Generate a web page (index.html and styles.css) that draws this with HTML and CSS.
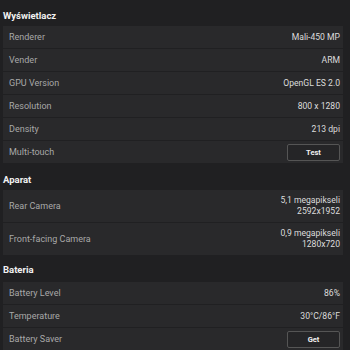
FILE: index.html
```html
<!DOCTYPE html>
<html>
<head>
<meta charset="utf-8">
<link rel="stylesheet" href="styles.css">
</head>
<body>
<div class="page">
  <div class="section-title">Wyświetlacz</div>
  <div class="list">
    <div class="row"><span class="label">Renderer</span><span class="value">Mali-450 MP</span></div>
    <div class="row"><span class="label">Vender</span><span class="value">ARM</span></div>
    <div class="row"><span class="label">GPU Version</span><span class="value">OpenGL ES 2.0</span></div>
    <div class="row"><span class="label">Resolution</span><span class="value">800 x 1280</span></div>
    <div class="row"><span class="label">Density</span><span class="value">213 dpi</span></div>
    <div class="row"><span class="label">Multi-touch</span><button class="btn">Test</button></div>
  </div>
  <div class="section-title">Aparat</div>
  <div class="list">
    <div class="row tall"><span class="label">Rear Camera</span><span class="value">5,1 megapikseli<br>2592x1952</span></div>
    <div class="row tall"><span class="label">Front-facing Camera</span><span class="value">0,9 megapikseli<br>1280x720</span></div>
  </div>
  <div class="section-title last">Bateria</div>
  <div class="list">
    <div class="row"><span class="label">Battery Level</span><span class="value">86%</span></div>
    <div class="row"><span class="label">Temperature</span><span class="value">30°C/86°F</span></div>
    <div class="row"><span class="label">Battery Saver</span><button class="btn">Get</button></div>
  </div>
</div>
</body>
</html>
```
FILE: styles.css
```css
html, body {
  margin: 0;
  padding: 0;
  background: #202022;
}
body {
  width: 350px;
  height: 350px;
  overflow: hidden;
  font-family: Roboto, "Noto Sans", sans-serif;
}
.page {
  display: flex;
  flex-direction: column;
}
.section-title {
  height: 26px;
  box-sizing: border-box;
  padding: 10px 0 0 3px;
  line-height: 11px;
  font-size: 9.5px;
  font-weight: bold;
  color: #f2f2f2;
}
.section-title.last {
  padding-top: 8px;
}
.list {
  display: flex;
  flex-direction: column;
  gap: 1px;
  margin: 0 7px 1px 3px;
}
.row {
  height: 22px;
  display: flex;
  align-items: center;
  justify-content: space-between;
  padding: 0 3px 0 6px;
  background: #29292b;
  font-size: 9px;
}
.row.tall {
  height: 32px;
}
.label {
  color: #a8a8a8;
}
.value {
  color: #dcdcdc;
  text-align: right;
  line-height: 11px;
  font-size: 8.6px;
}
.btn {
  width: 53px;
  height: 17px;
  border: 1px solid #555;
  border-radius: 2px;
  background: #252527;
  color: #f0f0f0;
  font-family: Roboto, sans-serif;
  font-size: 7.5px;
  font-weight: bold;
  padding: 0;
}
```
